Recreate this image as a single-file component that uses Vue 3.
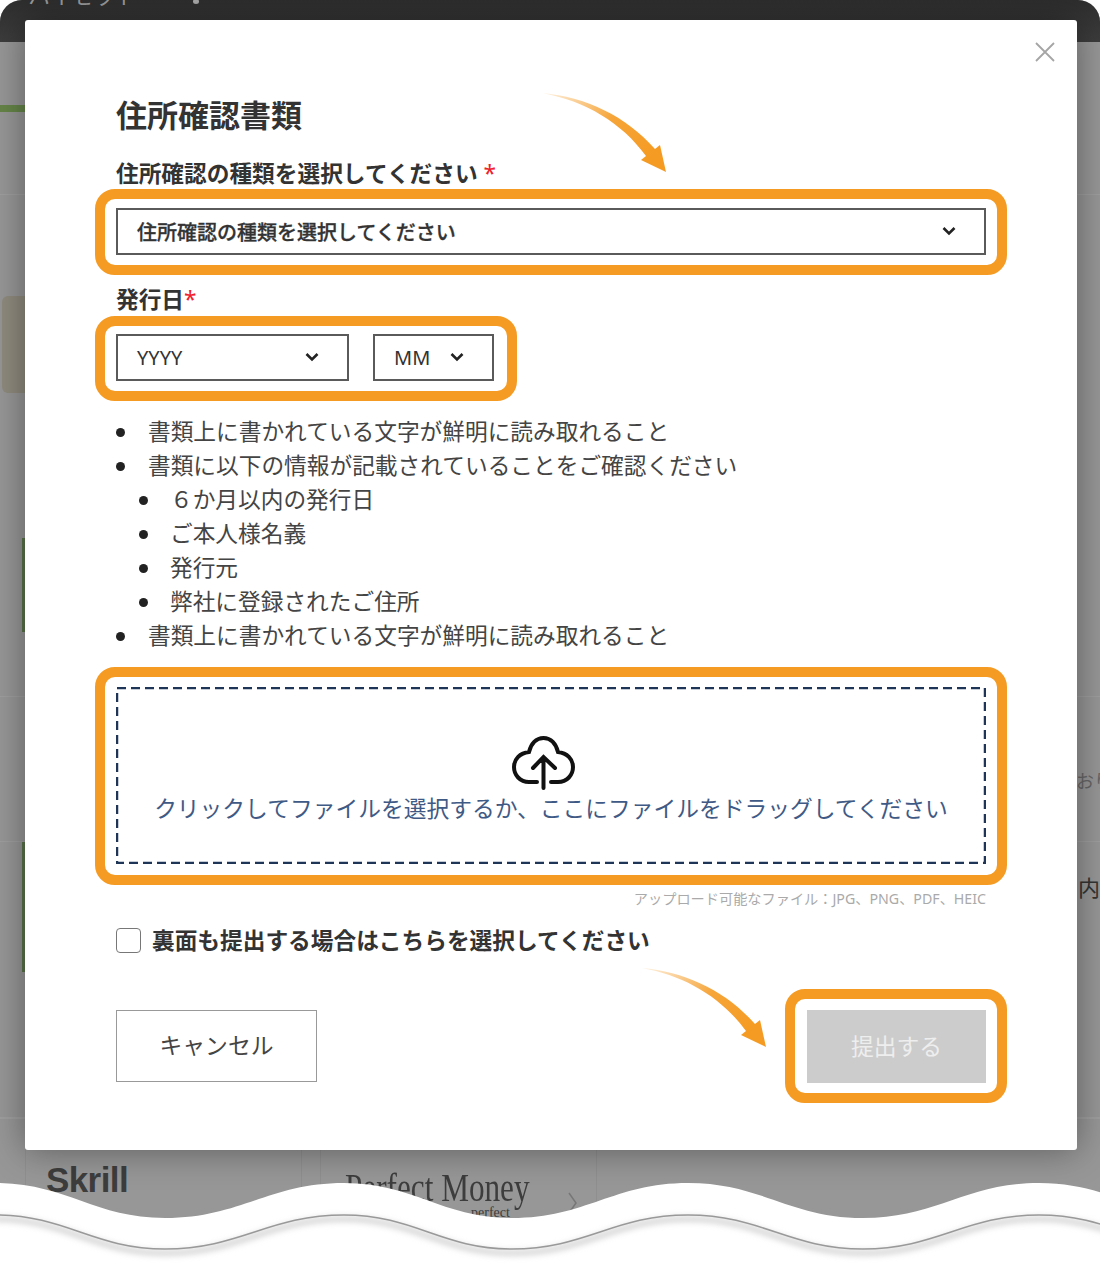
<template>
  <div class="page">
    <!-- dimmed page behind the dialog -->
    <div class="backdrop">
      <div class="topbar">
        <span class="topbar-text">ハイセット</span>
        <span class="topbar-caret"></span>
      </div>
      <div class="bg-row" style="height: 63px"></div>
      <div class="bg-green-line"></div>
      <div class="bg-row bg-line" style="height: 83px"></div>
      <div class="bg-row" style="height: 101px"></div>
      <div class="bg-row" style="height: 97px"><div class="bg-tan"></div></div>
      <div class="bg-row" style="height: 145px"></div>
      <div class="bg-row" style="height: 94px"><div class="bg-green"></div></div>
      <div class="bg-row bg-line" style="height: 65px"></div>
      <div class="bg-row bg-line bg-text-row" style="height: 145px">
        <span class="bg-text">おり</span>
      </div>
      <div class="bg-row bg-tall" style="height: 130px">
        <div class="bg-green"></div>
        <span class="bg-text-dark">内</span>
      </div>
      <div class="bg-row bg-line" style="height: 146px"></div>
      <div class="bg-cards">
        <div class="bg-card"><span class="skrill">Skrill</span></div>
        <div class="bg-card">
          <span class="money">Perfect Money</span>
          <span class="money-sub">perfect</span>
          <svg class="money-arrow" width="10" height="22" viewBox="0 0 10 22">
            <path d="M1 1L8 11L1 21" fill="none" stroke="#777" stroke-width="1.5" />
          </svg>
        </div>
      </div>
    </div>

    <div class="modal">
      <svg class="close" width="22" height="22" viewBox="0 0 22 22">
        <path d="M2 2L20 20M20 2L2 20" stroke="#a5a5a5" stroke-width="1.8" />
      </svg>

      <svg
        v-for="arrow in arrows"
        :key="arrow"
        class="arrow"
        :class="arrow"
        width="130"
        height="84"
        viewBox="0 0 130 84"
      >
        <defs>
          <linearGradient :id="arrow + '-fade'" x1="0" y1="0" x2="1" y2="0.6">
            <stop offset="0" stop-color="#f59b23" stop-opacity="0.12" />
            <stop offset="0.55" stop-color="#f59b23" stop-opacity="0.9" />
            <stop offset="1" stop-color="#f59b23" />
          </linearGradient>
        </defs>
        <path
          d="M2 1C46 5 86 24 115 57L120 53L126 80L101 68L106 64C82 31 46 9 2 1Z"
          :fill="'url(#' + arrow + '-fade)'"
        />
      </svg>

      <h2 class="title">住所確認書類</h2>

      <div class="label label-type">住所確認の種類を選択してください <span class="req">*</span></div>
      <div class="frame frame-wide">
        <div class="select select-full">
          <span class="select-strong">住所確認の種類を選択してください</span>
          <svg class="chevron" width="14" height="10" viewBox="0 0 14 10">
            <path d="M1.5 2L7 7.5L12.5 2" fill="none" stroke="#222" stroke-width="2.6" />
          </svg>
        </div>
      </div>

      <div class="label label-date">発行日<span class="req">*</span></div>
      <div class="frame frame-date">
        <div class="select select-year">
          <span>YYYY</span>
          <svg class="chevron" width="14" height="10" viewBox="0 0 14 10">
            <path d="M1.5 2L7 7.5L12.5 2" fill="none" stroke="#222" stroke-width="2.6" />
          </svg>
        </div>
        <div class="select select-month">
          <span>MM</span>
          <svg class="chevron" width="14" height="10" viewBox="0 0 14 10">
            <path d="M1.5 2L7 7.5L12.5 2" fill="none" stroke="#222" stroke-width="2.6" />
          </svg>
        </div>
      </div>

      <ul class="notes">
        <li>書類上に書かれている文字が鮮明に読み取れること</li>
        <li>
          書類に以下の情報が記載されていることをご確認ください
          <ul class="sub-notes">
            <li v-for="item in subNotes" :key="item">{{ item }}</li>
          </ul>
        </li>
        <li>書類上に書かれている文字が鮮明に読み取れること</li>
      </ul>

      <div class="frame frame-drop">
        <div class="drop">
          <svg class="dashes" width="870" height="177" viewBox="0 0 870 177">
            <rect
              x="1"
              y="1"
              width="868"
              height="175"
              fill="none"
              stroke="#1f3557"
              stroke-width="2.5"
              stroke-dasharray="9 5"
            />
          </svg>
          <svg class="cloud" width="64" height="54" viewBox="0 0 64 54">
            <path
              d="M25 46H17C8 46 2 39 2 31C2 23 8 17 17 16C19 8 24 2 31.5 2C39 2 44 8 46 16C55 17 61 23 61 31C61 39 55 46 46 46H39"
              fill="none"
              stroke="#111"
              stroke-width="4"
              stroke-linecap="round"
            />
            <path
              d="M31.5 22V52M21 32L31.5 21L43 32"
              fill="none"
              stroke="#111"
              stroke-width="4"
              stroke-linecap="round"
            />
          </svg>
          <div class="drop-text">クリックしてファイルを選択するか、ここにファイルをドラッグしてください</div>
        </div>
      </div>
      <div class="hint">アップロード可能なファイル：JPG、PNG、PDF、HEIC</div>

      <label class="check">
        <input v-model="hasBackSide" type="checkbox" />
        <span>裏面も提出する場合はこちらを選択してください</span>
      </label>

      <div class="actions">
        <button class="cancel" type="button">キャンセル</button>
        <div class="frame frame-submit">
          <button class="submit" type="button">提出する</button>
        </div>
      </div>
    </div>

    <!-- torn edge at the bottom of the screenshot -->
    <svg class="wave" width="1100" height="100" viewBox="0 1164 1100 100">
      <defs>
        <filter id="wave-blur" x="-5%" y="-50%" width="110%" height="200%">
          <feGaussianBlur stdDeviation="3" />
        </filter>
      </defs>
      <path :d="waveTop" fill="#fff" />
      <path :d="waveLine" transform="translate(0 4)" fill="none" stroke="#c4c4c4" stroke-width="4" filter="url(#wave-blur)" />
      <path :d="waveLine" fill="none" stroke="#999" stroke-width="1.5" />
    </svg>
  </div>
</template>

<script setup>
import { ref } from "vue";

const hasBackSide = ref(false);
const arrows = ["arrow-select", "arrow-submit"];
const subNotes = ["６か月以内の発行日", "ご本人様名義", "発行元", "弊社に登録されたご住所"];

// crests and troughs of the torn edge, top line
const stops = [-5, 165, 344, 512, 688, 863, 1039, 1210];

const wavePath = (crestY, troughY) => {
  let d = `M${stops[0]} ${crestY}`;
  for (let i = 1; i < stops.length; i++) {
    const dx = (stops[i] - stops[i - 1]) * 0.42;
    const from = i % 2 ? crestY : troughY;
    const to = i % 2 ? troughY : crestY;
    d += `C${stops[i - 1] + dx} ${from} ${stops[i] - dx} ${to} ${stops[i]} ${to}`;
  }
  return d;
};

const waveLine = wavePath(1215, 1249);
const waveTop = wavePath(1183, 1218) + "V1264H-5Z";
</script>

<style scoped>
.page {
  position: relative;
  width: 1100px;
  height: 1264px;
  overflow: hidden;
  background: #fff;
  font-family: "Noto Sans", "Noto Sans CJK JP", sans-serif;
  color: #333;
}

/* backdrop */
.backdrop {
  height: 1264px;
  overflow: hidden;
  background: #979797;
  border-radius: 22px 22px 0 0;
}

.topbar {
  height: 42px;
  display: flex;
  align-items: flex-start;
  gap: 55px;
  padding-left: 28px;
  overflow: hidden;
  background: linear-gradient(#2e2e2e, #3d3d3d);
}

.topbar-text {
  margin-top: -19px;
  font-size: 22px;
  line-height: 28px;
  color: #999;
}

.topbar-caret {
  width: 6px;
  height: 5px;
  margin-top: -1px;
  border-radius: 50%;
  background: #aaa;
}

.bg-row {
  position: relative;
  display: flex;
  box-sizing: border-box;
  justify-content: space-between;
}

.bg-line {
  border-bottom: 1px solid #9f9f9f;
}

.bg-green-line {
  width: 30px;
  height: 7px;
  background: #668549;
}

.bg-tan {
  width: 60px;
  margin-left: 2px;
  border-radius: 6px;
  background: #8f8b7e;
}

.bg-green {
  width: 5px;
  margin-left: 22px;
  background: #5a744a;
}

.bg-text-row {
  justify-content: flex-end;
  align-items: flex-end;
  padding-bottom: 48px;
}

.bg-text {
  width: 24px;
  overflow: hidden;
  white-space: nowrap;
  font-size: 18px;
  line-height: 24px;
  color: #666;
}

.bg-text-dark {
  height: 30px;
  padding-left: 4px;
  margin-top: 30px;
  border-left: 2px solid #5a6f8f;
  font-size: 22px;
  line-height: 30px;
  color: #333;
}

.bg-cards {
  display: flex;
  gap: 18px;
  padding-left: 25px;
  height: 146px;
  border-top: 1px solid #9f9f9f;
}

.bg-card {
  position: relative;
  box-sizing: border-box;
  width: 277px;
  padding-left: 20px;
  border: 1px solid #8f8f8f;
}

.skrill {
  display: block;
  margin-top: 38px;
  font-family: "Liberation Sans", sans-serif;
  font-size: 35px;
  font-weight: 700;
  line-height: 44px;
  letter-spacing: -0.6px;
  color: #3d3d3d;
}

.money {
  display: block;
  margin-top: 50px;
  margin-left: 4px;
  font-family: "Liberation Serif", serif;
  font-size: 39px;
  line-height: 36px;
  white-space: nowrap;
  transform: scaleX(0.8);
  transform-origin: left;
  color: #3d3d3d;
}

.money-sub {
  position: absolute;
  top: 86px;
  left: 150px;
  font-family: "Liberation Serif", serif;
  font-size: 14px;
  line-height: 14px;
  color: #3d3d3d;
}

.money-arrow {
  position: absolute;
  top: 72px;
  right: 18px;
}

/* dialog */
.modal {
  position: absolute;
  top: 20px;
  left: 25px;
  box-sizing: border-box;
  width: 1052px;
  height: 1130px;
  padding: 73px 91px 0;
  border-radius: 3px;
  background: #fff;
  box-shadow: 0 0 36px rgba(0, 0, 0, 0.4);
}

.close {
  position: absolute;
  top: 21px;
  right: 21px;
}

.arrow {
  position: absolute;
}

.arrow-select {
  top: 72px;
  left: 515px;
}

.arrow-submit {
  top: 947px;
  left: 615px;
}

.title {
  margin: 0;
  font-size: 31px;
  font-weight: 700;
  line-height: 44px;
}

.label {
  font-size: 22.7px;
  font-weight: 700;
}

.label-type {
  margin-top: 22px;
  line-height: 30px;
}

.label-date {
  margin-top: 9px;
  line-height: 32px;
}

.req {
  color: #f0202c;
  font-weight: 400;
}

.frame {
  box-sizing: border-box;
  border: 10px solid #f59b23;
  border-radius: 20px;
}

.frame-wide {
  margin: 0 -21px;
  padding: 9px 11px 10px;
}

.frame-date {
  display: inline-flex;
  gap: 24px;
  margin-left: -21px;
  padding: 8px 13px 10px 11px;
  vertical-align: top;
}

.select {
  box-sizing: border-box;
  display: flex;
  align-items: center;
  justify-content: space-between;
  height: 47px;
  padding-left: 19px;
  border: 2px solid #5a5a5a;
  font-size: 20px;
  color: #333;
}

.select-strong {
  font-weight: 500;
  -webkit-text-stroke: 0.3px #333;
}

.select-full {
  padding-right: 28px;
}

.select-year {
  width: 233px;
  padding-right: 28px;
}

.select-month {
  width: 121px;
  padding-right: 28px;
}

.chevron {
  flex: none;
  margin-top: -2px;
}

.notes,
.sub-notes {
  margin: 0;
  padding: 0;
  list-style: none;
  font-size: 22.7px;
  line-height: 34px;
  color: #444;
}

.notes {
  margin-top: 14px;
  padding-left: 32px;
}

.sub-notes {
  margin-left: 22px;
}

.notes li {
  position: relative;
}

.notes li::before {
  content: "";
  position: absolute;
  top: 13px;
  left: -32px;
  width: 9px;
  height: 9px;
  border-radius: 50%;
  background: #222;
}

.sub-notes li::before {
  left: -31px;
}

.frame-drop {
  margin: 14px -21px 0;
  padding: 10px 11px 11px;
}

.drop {
  position: relative;
  display: flex;
  flex-direction: column;
  align-items: center;
  box-sizing: border-box;
  height: 177px;
  padding-top: 49px;
}

.dashes {
  position: absolute;
  top: 0;
  left: 0;
}

.cloud {
  flex: none;
  margin-left: -14px;
}

.drop-text {
  margin-top: 2px;
  font-size: 22.75px;
  line-height: 34px;
  white-space: nowrap;
  color: #3f5a85;
}

.hint {
  font-size: 14.2px;
  line-height: 27px;
  text-align: right;
  color: #aaa;
}

.check {
  display: flex;
  align-items: center;
  gap: 11px;
  margin-top: 16px;
  font-size: 22.7px;
  font-weight: 700;
  line-height: 25px;
}

.check input {
  flex: none;
  box-sizing: border-box;
  width: 25px;
  height: 25px;
  margin: 0;
  appearance: none;
  border: 1.5px solid #777;
  border-radius: 4px;
  background: #fff;
}

.actions {
  display: flex;
  align-items: center;
  justify-content: space-between;
  margin: 36px -21px 0 0;
}

.cancel,
.submit {
  padding: 0 0 3px;
  font-family: inherit;
  font-size: 22.8px;
}

.cancel {
  box-sizing: border-box;
  width: 201px;
  height: 72px;
  border: 1.5px solid #999;
  background: #fff;
  color: #444;
}

.frame-submit {
  padding: 11px 11px 10px 12px;
}

.submit {
  display: block;
  width: 179px;
  height: 73px;
  border: 0;
  background: #ccc;
  color: #eee;
}

.wave {
  position: absolute;
  left: 0;
  bottom: 0;
}
</style>
